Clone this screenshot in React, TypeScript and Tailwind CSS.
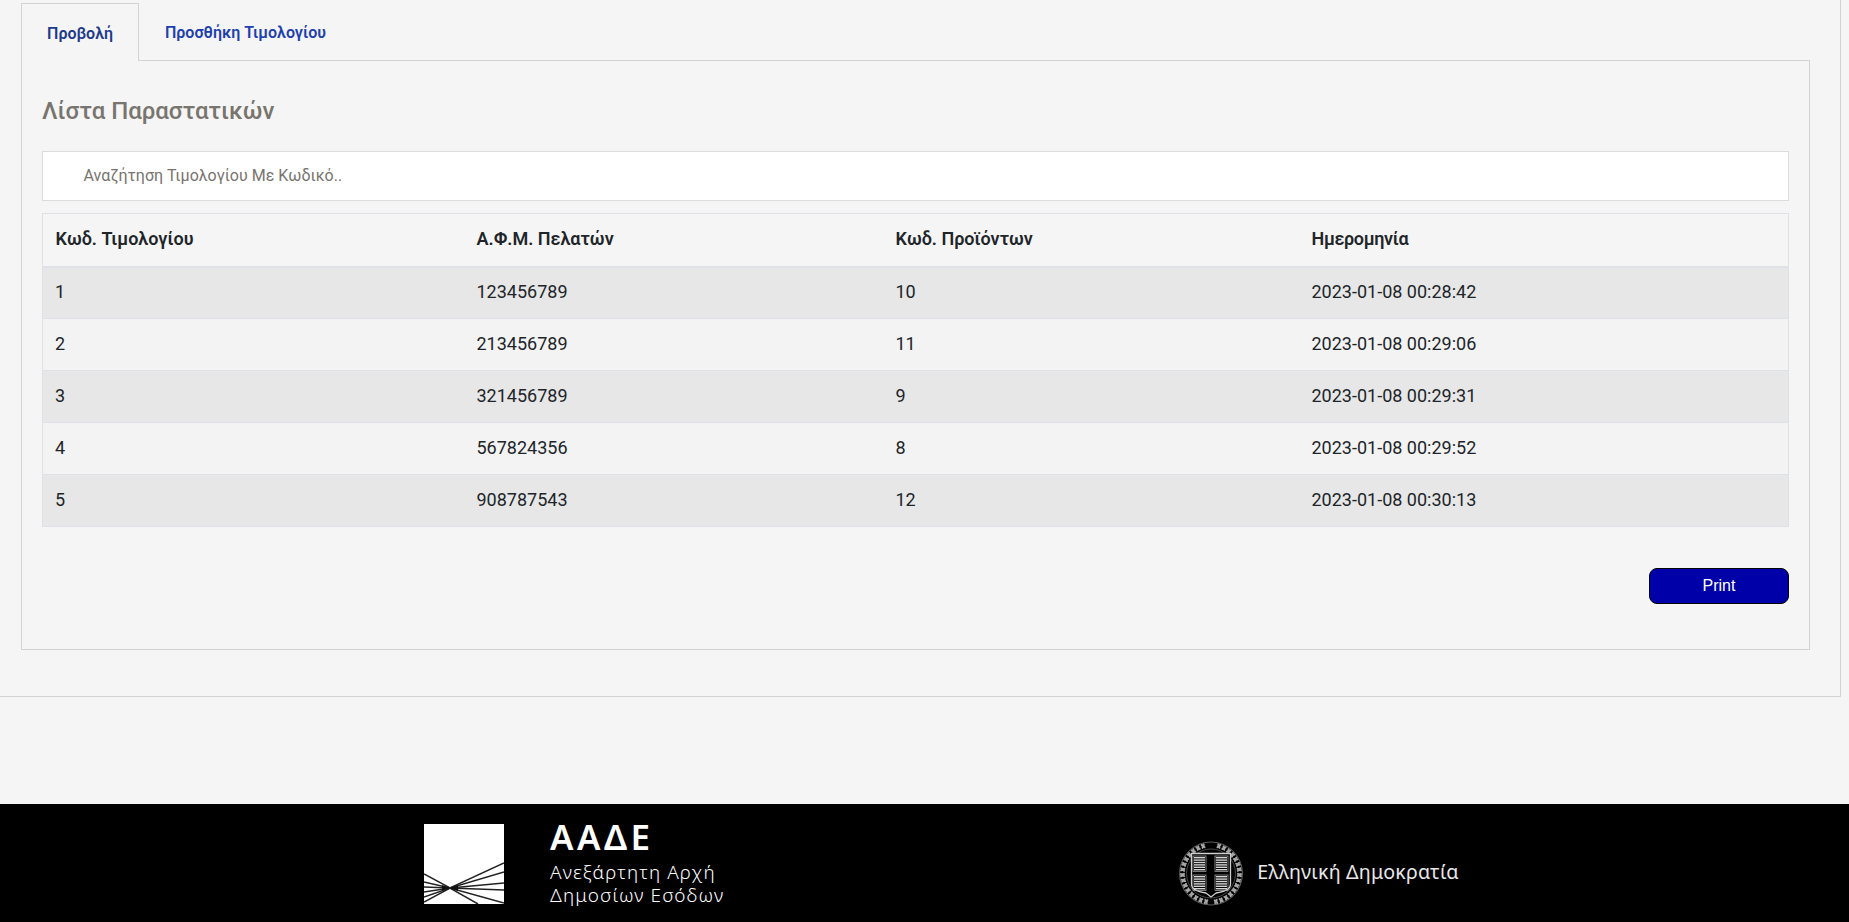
import React from "react";

const rows = [
  ["1", "123456789", "10", "2023-01-08 00:28:42"],
  ["2", "213456789", "11", "2023-01-08 00:29:06"],
  ["3", "321456789", "9", "2023-01-08 00:29:31"],
  ["4", "567824356", "8", "2023-01-08 00:29:52"],
  ["5", "908787543", "12", "2023-01-08 00:30:13"],
];

function AadeMark() {
  return (
    <svg width="80" height="80" viewBox="0 0 80 80" className="block">
      <rect width="80" height="80" fill="#fff" />
      <g stroke="#222" strokeWidth="1.5" fill="none">
        <path d="M0 50 L26 64 L80 39" />
        <path d="M0 58 L26 64 L80 48" />
        <path d="M0 63 L26 64 L80 59" />
        <path d="M0 68 L26 64 L80 66" />
        <path d="M0 73 L26 64 L80 79" />
        <path d="M0 78 L26 64 L54 80" />
      </g>
      <path d="M18 61 L26 64 L18 67 Z M34 61 L26 64 L34 67 Z" fill="#111" />
    </svg>
  );
}

function Stripes({ x, y, w, n }: { x: number; y: number; w: number; n: number }) {
  return (
    <g>
      <rect x={x - 1} y={y - 1} width={w + 2} height={n * 2.4 + 1.2} fill="none" stroke="#b0b0b0" strokeWidth="0.7" />
      {Array.from({ length: n }, (_, i) => (
        <rect key={i} x={x} y={y + i * 2.4} width={w} height="1.4" fill="#d4d4d4" />
      ))}
    </g>
  );
}

function Emblem() {
  const left = Array.from({ length: 15 }, (_, i) => 190 + i * 11);
  const right = Array.from({ length: 15 }, (_, i) => 170 - i * 11);
  return (
    <svg width="66" height="67" viewBox="0 0 66 67" className="block">
      <circle cx="33" cy="33.5" r="31.5" fill="none" stroke="#777" strokeWidth="0.8" />
      <circle cx="33" cy="33.5" r="24.5" fill="none" stroke="#666" strokeWidth="0.7" />
      <g fill="#a6a6a6">
        {left.map((a) => (
          <React.Fragment key={a}>
            <ellipse cx="33" cy="5" rx="1.2" ry="3" transform={`rotate(${a} 33 33.5) rotate(-35 33 5)`} />
            <ellipse cx="33" cy="5" rx="1.2" ry="3" transform={`rotate(${a} 33 33.5) rotate(35 33 5)`} />
          </React.Fragment>
        ))}
        {right.map((a) => (
          <React.Fragment key={a}>
            <ellipse cx="33" cy="5" rx="1.2" ry="3" transform={`rotate(${a} 33 33.5) rotate(-35 33 5)`} />
            <ellipse cx="33" cy="5" rx="1.2" ry="3" transform={`rotate(${a} 33 33.5) rotate(35 33 5)`} />
          </React.Fragment>
        ))}
      </g>
      <path d="M13.5 13.5 H52.5 V44 Q52.5 51 38 53 L33 57 L28 53 Q13.5 51 13.5 44 Z" fill="#000" stroke="#d0d0d0" strokeWidth="1.3" />
      <Stripes x={16} y={17} w={11} n={6} />
      <Stripes x={38} y={17} w={11} n={6} />
      <Stripes x={16} y={36} w={11} n={6} />
      <Stripes x={38} y={36} w={11} n={6} />
    </svg>
  );
}

export default function App() {
  return (
    <div className="min-h-[922px] flex flex-col bg-[#f5f5f5] font-['Roboto',sans-serif] text-[#212529] overflow-hidden">
      <main className="flex-1">
        <div className="w-[1841px] h-[697px] border-r border-b border-[#d3d3d3] pt-[3px] pl-[21px] pr-[30px]">
          <div className="flex h-[58px]">
            <div className="w-[118px] h-[58px] border border-b-0 border-[#d3d3d3] bg-[#f5f5f5] flex items-start justify-center pt-[18px] relative z-10 text-[16px] leading-[24px] font-semibold text-[#1e3a8a]">
              Προβολή
            </div>
            <div className="pl-[26px] pt-[18px] text-[16px] leading-[24px] font-semibold text-[#1d40af]">
              Προσθήκη Τιμολογίου
            </div>
          </div>
          <section className="h-[590px] -mt-px border border-[#d3d3d3] px-[20px]">
            <h2 className="mt-[34px] h-[32px] text-[24px] leading-[32px] font-medium text-[#78746e]">Λίστα Παραστατικών</h2>
            <div className="mt-[24px] h-[50px] border border-[#dcdcdc] bg-white pl-[40.5px] flex items-center text-[16px] text-[#78746e]">
              Αναζήτηση Τιμολογίου Με Κωδικό..
            </div>
            <table className="mt-[12px] w-[1747px] table-fixed border-collapse border border-[#dee2e6] text-[18px]">
              <colgroup>
                <col className="w-[421px]" />
                <col className="w-[419px]" />
                <col className="w-[416px]" />
                <col />
              </colgroup>
              <thead>
                <tr className="h-[53px] border-b-2 border-[#dee2e6] text-left text-[#212529]">
                  <th className="pl-[12.5px] pb-[3px] font-semibold">Κωδ. Τιμολογίου</th>
                  <th className="pl-[13px] pb-[3px] font-semibold">Α.Φ.Μ. Πελατών</th>
                  <th className="pl-[13px] pb-[3px] font-semibold">Κωδ. Προϊόντων</th>
                  <th className="pl-[13px] pb-[3px] font-semibold tracking-[-0.35px]">Ημερομηνία</th>
                </tr>
              </thead>
              <tbody>
                {rows.map((r, i) => (
                  <tr key={r[0]} className={`h-[52px] border-b border-[#dee2e6] ${i % 2 === 0 ? "bg-[#e7e7e7]" : "bg-[#f3f3f3]"}`}>
                    {r.map((c, j) => (
                      <td key={j} className={j === 0 ? "pl-[12px] pb-[2px]" : "pl-[13px] pb-[2px]"}>{c}</td>
                    ))}
                  </tr>
                ))}
              </tbody>
            </table>
            <div className="mt-[41px] flex justify-end">
              <button className="w-[140px] h-[36px] rounded-[8px] border border-black bg-[#0000a8] text-white text-[16px] font-['Liberation_Sans',sans-serif]">
                Print
              </button>
            </div>
          </section>
        </div>
      </main>
      <footer className="h-[118px] bg-black text-white flex">
        <div className="w-[424px]" />
        <div className="pt-[20px]"><AadeMark /></div>
        <div className="ml-[46px] pt-[15px] font-['Noto_Sans',sans-serif]">
          <div className="text-[35px] leading-[36px] font-semibold tracking-[3.5px]">ΑΑΔΕ</div>
          <div className="mt-[6px] text-[19px] leading-[23px] font-light tracking-[1.1px] text-white">Ανεξάρτητη Αρχή</div>
          <div className="text-[19px] leading-[23px] font-light tracking-[1.1px] text-white">Δημοσίων Εσόδων</div>
        </div>
        <div className="ml-[454px] pt-[36px]"><Emblem /></div>
        <div className="ml-[13px] pt-[55px] font-['Noto_Sans',sans-serif] text-[19.6px] leading-[26px] tracking-[0.2px] text-[#e8e8e8]">
          Ελληνική Δημοκρατία
        </div>
      </footer>
    </div>
  );
}
